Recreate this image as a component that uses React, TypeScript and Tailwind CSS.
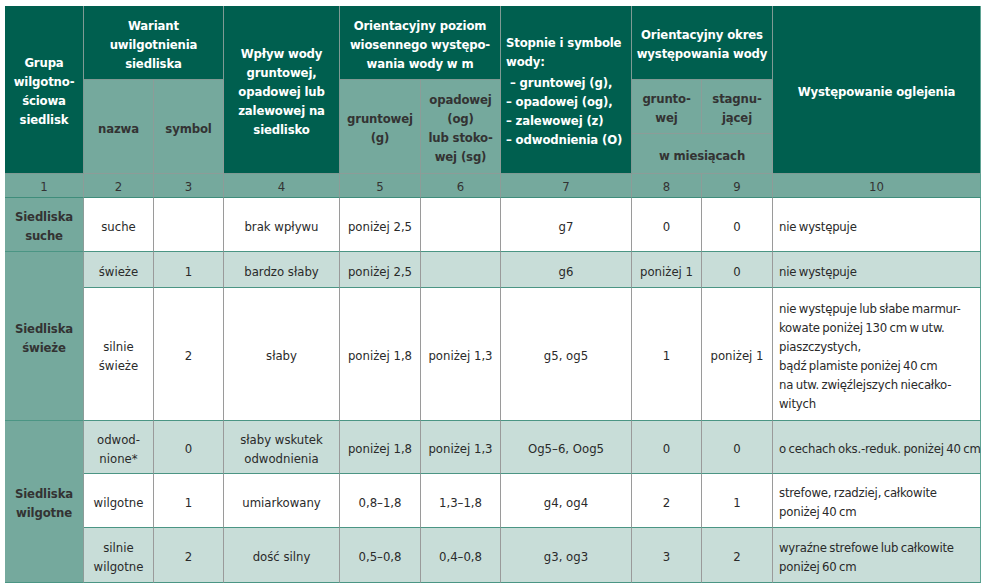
const dark =
  "bg-[#005f4f] text-white font-bold text-[13px] tracking-[-0.15px] pt-[3px] border-r border-b border-[#7f9a94]";
const teal =
  "bg-[#75a99d] text-[#333] font-bold text-[13px] tracking-[-0.15px] pt-[3px] border-r border-b border-[#8c9c98]";

type Cell = string | string[];

interface BodyRow {
  row: string;
  light: boolean;
  cells: Cell[];
}

const rows: BodyRow[] = [
  {
    row: "row-start-5",
    light: false,
    cells: ["suche", "", "brak wpływu", "poniżej 2,5", "", "g7", "0", "0", "nie występuje"],
  },
  {
    row: "row-start-6",
    light: true,
    cells: ["świeże", "1", "bardzo słaby", "poniżej 2,5", "", "g6", "poniżej 1", "0", "nie występuje"],
  },
  {
    row: "row-start-7",
    light: false,
    cells: [
      ["silnie", "świeże"],
      "2",
      "słaby",
      "poniżej 1,8",
      "poniżej 1,3",
      "g5, og5",
      "1",
      "poniżej 1",
      [
        "nie występuje lub słabe marmur-",
        "kowate poniżej 130 cm w utw.",
        "piaszczystych,",
        "bądź plamiste poniżej 40 cm",
        "na utw. zwięźlejszych niecałko-",
        "witych",
      ],
    ],
  },
  {
    row: "row-start-8",
    light: true,
    cells: [
      ["odwod-", "nione*"],
      "0",
      ["słaby wskutek", "odwodnienia"],
      "poniżej 1,8",
      "poniżej 1,3",
      "Og5–6, Oog5",
      "0",
      "0",
      "o cechach oks.-reduk. poniżej 40 cm",
    ],
  },
  {
    row: "row-start-9",
    light: false,
    cells: [
      "wilgotne",
      "1",
      "umiarkowany",
      "0,8–1,8",
      "1,3–1,8",
      "g4, og4",
      "2",
      "1",
      ["strefowe, rzadziej, całkowite", "poniżej 40 cm"],
    ],
  },
  {
    row: "row-start-10",
    light: true,
    cells: [
      ["silnie", "wilgotne"],
      "2",
      "dość silny",
      "0,5–0,8",
      "0,4–0,8",
      "g3, og3",
      "3",
      "2",
      ["wyraźne strefowe lub całkowite", "poniżej 60 cm"],
    ],
  },
];

function Lines({ text }: { text: Cell }) {
  const list = Array.isArray(text) ? text : [text];
  return (
    <div>
      {list.map((l, i) => (
        <div key={i} className="whitespace-nowrap">
          {l}
        </div>
      ))}
    </div>
  );
}

function Body({ r }: { r: BodyRow }) {
  return (
    <>
      {r.cells.map((c, i) => {
        const last = i === r.cells.length - 1;
        return (
          <div
            key={i}
            className={`${r.row} flex items-center pt-[3px] border-b border-b-[#4b9584] border-r ${
              last
                ? "justify-start pl-[6px] tracking-[-0.2px] [word-spacing:-1px] border-r-[#5fa393]"
                : "justify-center text-center border-r-[#9a9a9a]"
            } ${r.light ? "bg-[#c8ddd8]" : "bg-white"}`}
          >
            <Lines text={c} />
          </div>
        );
      })}
    </>
  );
}

export default function App() {
  return (
    <div
      className="w-[988px] h-[588px] bg-white pl-[5px] pt-[6px] text-[13px] leading-[19px] text-[#2a2a2a]"
      style={{ fontFamily: '"DejaVu Sans Condensed", "DejaVu Sans", sans-serif', fontStretch: "condensed" }}
    >
      <div className="grid w-[976px] grid-cols-[79px_70px_70px_116px_81px_80px_131px_70px_71px_208px] grid-rows-[74px_54px_40px_24px_54px_36px_133px_53px_54px_55px]">
        {/* header */}
        <div className={`${dark} col-start-1 row-start-1 row-span-3 flex items-center justify-center text-center`}>
          <Lines text={["Grupa", "wilgotno-", "ściowa", "siedlisk"]} />
        </div>
        <div className={`${dark} col-start-2 col-span-2 row-start-1 flex items-center justify-center text-center`}>
          <Lines text={["Wariant", "uwilgotnienia", "siedliska"]} />
        </div>
        <div className={`${teal} col-start-2 row-start-2 row-span-2 flex items-center justify-center`}>nazwa</div>
        <div className={`${teal} col-start-3 row-start-2 row-span-2 flex items-center justify-center`}>symbol</div>
        <div className={`${dark} col-start-4 row-start-1 row-span-3 flex items-center justify-center text-center`}>
          <Lines text={["Wpływ wody", "gruntowej,", "opadowej lub", "zalewowej na", "siedlisko"]} />
        </div>
        <div className={`${dark} col-start-5 col-span-2 row-start-1 flex items-center justify-center text-center`}>
          <Lines text={["Orientacyjny poziom", "wiosennego występo-", "wania wody w m"]} />
        </div>
        <div className={`${teal} col-start-5 row-start-2 row-span-2 flex items-center justify-center text-center`}>
          <Lines text={["gruntowej", "(g)"]} />
        </div>
        <div className={`${teal} col-start-6 row-start-2 row-span-2 flex items-center justify-center text-center`}>
          <Lines text={["opadowej", "(og)", "lub stoko-", "wej (sg)"]} />
        </div>
        <div className={`${dark} col-start-7 row-start-1 row-span-3 flex items-center pl-[5px]`}>
          <div>
            <div>Stopnie i symbole</div>
            <div className="mb-[2px]">wody:</div>
            <div className="whitespace-nowrap pl-[4px]">– gruntowej (g),</div>
            <div className="whitespace-nowrap">– opadowej (og),</div>
            <div className="whitespace-nowrap">– zalewowej (z)</div>
            <div className="whitespace-nowrap">– odwodnienia (O)</div>
          </div>
        </div>
        <div className={`${dark} col-start-8 col-span-2 row-start-1 flex items-center justify-center text-center`}>
          <Lines text={["Orientacyjny okres", "występowania wody"]} />
        </div>
        <div className={`${teal} col-start-8 row-start-2 flex items-center justify-center text-center`}>
          <Lines text={["grunto-", "wej"]} />
        </div>
        <div className={`${teal} col-start-9 row-start-2 flex items-center justify-center text-center`}>
          <Lines text={["stagnu-", "jącej"]} />
        </div>
        <div className={`${teal} col-start-8 col-span-2 row-start-3 flex items-center justify-center`}>w miesiącach</div>
        <div className={`${dark} col-start-10 row-start-1 row-span-3 flex items-center justify-center border-r-[#5fa393]`}>
          Występowanie oglejenia
        </div>

        {/* column numbers */}
        {["1", "2", "3", "4", "5", "6", "7", "8", "9", "10"].map((n, i) => (
          <div
            key={n}
            className={`row-start-4 flex items-center justify-center pt-[2px] bg-[#75a99d] text-[#333] border-b border-b-[#3f8d7b] border-r ${
              i === 9 ? "border-r-[#5fa393]" : "border-r-[#8c9c98]"
            }`}
          >
            {n}
          </div>
        ))}

        {/* group labels */}
        <div className="col-start-1 row-start-5 flex items-center justify-center pt-[3px] text-center font-bold tracking-[-0.15px] bg-[#75a99d] text-[#333] border-r border-r-[#8c9c98] border-b border-b-[#4b9584]">
          <Lines text={["Siedliska", "suche"]} />
        </div>
        <div className="col-start-1 row-start-6 row-span-2 flex items-center justify-center pt-[3px] text-center font-bold tracking-[-0.15px] bg-[#75a99d] text-[#333] border-r border-r-[#8c9c98] border-b border-b-[#4b9584]">
          <Lines text={["Siedliska", "świeże"]} />
        </div>
        <div className="col-start-1 row-start-8 row-span-3 flex items-center justify-center pt-[3px] text-center font-bold tracking-[-0.15px] bg-[#75a99d] text-[#333] border-r border-r-[#8c9c98] border-b border-b-[#4b9584]">
          <Lines text={["Siedliska", "wilgotne"]} />
        </div>

        {rows.map((r) => (
          <Body key={r.row} r={r} />
        ))}
      </div>
    </div>
  );
}
